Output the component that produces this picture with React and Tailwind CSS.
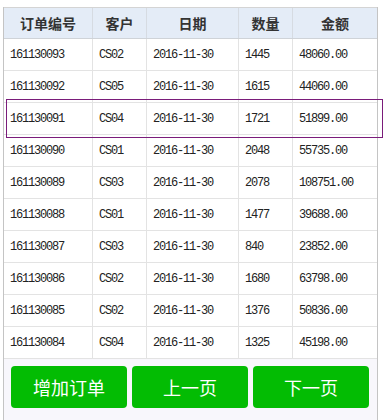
import React from 'react';

const rows = [
  ['161130093', 'CS02', '2016-11-30', '1445', '48060.00'],
  ['161130092', 'CS05', '2016-11-30', '1615', '44060.00'],
  ['161130091', 'CS04', '2016-11-30', '1721', '51899.00'],
  ['161130090', 'CS01', '2016-11-30', '2048', '55735.00'],
  ['161130089', 'CS03', '2016-11-30', '2078', '108751.00'],
  ['161130088', 'CS01', '2016-11-30', '1477', '39688.00'],
  ['161130087', 'CS03', '2016-11-30', '840', '23852.00'],
  ['161130086', 'CS02', '2016-11-30', '1680', '63798.00'],
  ['161130085', 'CS02', '2016-11-30', '1376', '50836.00'],
  ['161130084', 'CS04', '2016-11-30', '1325', '45198.00'],
];

const widths = ['w-[89px]', 'w-[54px]', 'w-[92px]', 'w-[54px]', 'w-[84px]'];
const headers = ['订单编号', '客户', '日期', '数量', '金额'];

export default function App() {
  return (
    <div className="w-[390px] h-[420px] bg-white overflow-hidden pt-[7px] pl-[3px]">
      <div className="relative w-[375px] h-[413px] border-x border-[#c4c4c4] bg-[#f8f7fc]">
        {/* header */}
        <div className="flex h-[32px] bg-[#e4ecf7] border-y border-t-[#d4d4d4] border-b-[#cfd3d8] font-['Noto_Sans_CJK_SC',sans-serif] font-bold text-[14px] text-[#333]">
          {headers.map((h, i) => (
            <div
              key={h}
              className={`${widths[i]} flex items-center justify-center ${i < 4 ? 'border-r border-[#d6dbe2]' : ''}`}
            >
              {h}
            </div>
          ))}
        </div>

        {/* body rows */}
        <div className="bg-white">
          {rows.map((r) => (
            <div key={r[0]} className="flex h-[32px] border-b border-[#e3e3e3] font-['Liberation_Mono',monospace] text-[12px] tracking-[-1.2px] text-[#222]">
              {r.map((c, i) => (
                <div
                  key={i}
                  className={`${widths[i]} flex items-center pl-[6px] ${i < 4 ? 'border-r border-[#e3e3e3]' : ''}`}
                >
                  {c}
                </div>
              ))}
            </div>
          ))}
        </div>

        {/* buttons */}
        <div className="flex gap-[5px] pl-[7px] pt-[7px] font-['Noto_Sans_CJK_SC',sans-serif] text-[18px] text-white">
          <button className="w-[116px] h-[42px] rounded-[4px] bg-[#03bc03]">增加订单</button>
          <button className="w-[116px] h-[42px] rounded-[4px] bg-[#03bc03]">上一页</button>
          <button className="w-[116px] h-[42px] rounded-[4px] bg-[#03bc03]">下一页</button>
        </div>

        {/* focused row outline */}
        <div className="absolute left-[2px] top-[92px] w-[377px] h-[39px] border border-[#7a1c7a] pointer-events-none" />
      </div>
    </div>
  );
}
